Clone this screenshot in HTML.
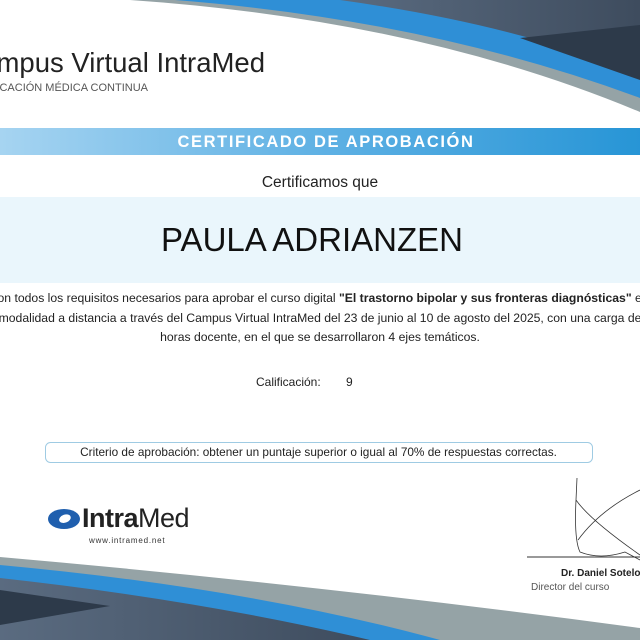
<!DOCTYPE html>
<html><head><meta charset="utf-8"><style>
body{margin:0;width:640px;height:640px;overflow:hidden;background:#fff;position:relative;font-family:"Liberation Sans",sans-serif;color:#222}
.a{position:absolute;white-space:nowrap}
</style></head><body>
<svg class="a" style="left:0;top:0" width="640" height="640" viewBox="0 0 640 640">
<defs><linearGradient id="g" x1="0" x2="1"><stop offset="0" stop-color="#a6d4f1"/><stop offset="0.5" stop-color="#5fb1e4"/><stop offset="1" stop-color="#2795d6"/></linearGradient>
<linearGradient id="d" x1="0" x2="1"><stop offset="0" stop-color="#5a6b80"/><stop offset="1" stop-color="#3e4c5e"/></linearGradient></defs>
<path d="M130,0 Q420,20 640,112 L640,0Z" fill="#95a3a6"/>
<path d="M175,0 Q430,20 640,98 L640,0Z" fill="#2f8fd6"/>
<path d="M340,0 Q520,25 640,76 L640,0Z" fill="url(#d)"/>
<path d="M520,38 L640,25 L640,80Z" fill="#2d3a4a"/>
<path d="M0,557 Q320,585 640,628 L640,640 L0,640Z" fill="#95a3a6"/>
<path d="M0,565 Q250,588 440,640 L0,640Z" fill="#2f8fd6"/>
<path d="M0,578 Q200,600 370,640 L0,640Z" fill="url(#d)"/>
<path d="M0,590 L110,606 L0,625Z" fill="#2d3a4a"/>
<rect x="0" y="128" width="640" height="27" fill="url(#g)"/>
<rect x="0" y="197" width="640" height="86" fill="#eaf6fc"/>
<rect x="45.5" y="442.5" width="547" height="20" rx="5" fill="none" stroke="#9fcbe3"/>
<line x1="527" y1="557" x2="640" y2="557" stroke="#333" stroke-width="1"/>
<path d="M577,478 L576,500 Q574,540 580,552 Q600,560 625,552 L640,560 M640,490 Q600,510 578,540 M576,500 Q590,520 640,555" fill="none" stroke="#333" stroke-width="0.8"/>
<g transform="translate(64,519)"><ellipse cx="0" cy="0" rx="16" ry="10" fill="#1f5fae"/><ellipse cx="1" cy="0" rx="6" ry="4" fill="#fff" transform="rotate(-20)"/></g>
</svg>
<div style="position:absolute;left:0;top:0;width:640px;height:640px;overflow:hidden">
<div class="a" style="right:375px;top:47px;font-size:27.5px;color:#222">Campus Virtual IntraMed</div>
<div class="a" style="right:492px;top:82px;font-size:11px;color:#555">EDUCACIÓN MÉDICA CONTINUA</div>
<div class="a" style="left:0;width:652px;text-align:center;top:133px;font-size:16.5px;color:#fff;font-weight:bold;letter-spacing:1.6px">CERTIFICADO DE APROBACIÓN</div>
<div class="a" style="left:0;width:640px;text-align:center;top:174px;font-size:15.5px">Certificamos que</div>
<div class="a" style="left:0;width:624px;text-align:center;top:221px;font-size:33px;color:#111">PAULA ADRIANZEN</div>
<div class="a" style="left:-200px;width:1040px;text-align:center;top:289px;font-size:12.2px;line-height:19.5px">con todos los requisitos necesarios para aprobar el curso digital <b>"El trastorno bipolar y sus fronteras diagnósticas"</b> en<br>modalidad a distancia a través del Campus Virtual IntraMed del 23 de junio al 10 de agosto del 2025, con una carga de<br>horas docente, en el que se desarrollaron 4 ejes temáticos.</div>
<div class="a" style="left:256px;top:375px;font-size:12px">Calificación:</div>
<div class="a" style="left:346px;top:375px;font-size:12px">9</div>
<div class="a" style="left:45px;width:547px;text-align:center;top:445px;font-size:11.8px">Criterio de aprobación: obtener un puntaje superior o igual al 70% de respuestas correctas.</div>
<div class="a" style="left:82px;top:503px;font-size:27px;color:#222;letter-spacing:-0.5px"><b>Intra</b>Med</div>
<div class="a" style="left:89px;top:536px;font-size:8px;color:#333;letter-spacing:0.8px">www.intramed.net</div>
<div class="a" style="left:561px;top:568px;font-size:10px;font-weight:bold">Dr. Daniel Sotelo</div>
<div class="a" style="left:531px;top:582px;font-size:10px;color:#555">Director del curso</div>
</div>
</body></html>
